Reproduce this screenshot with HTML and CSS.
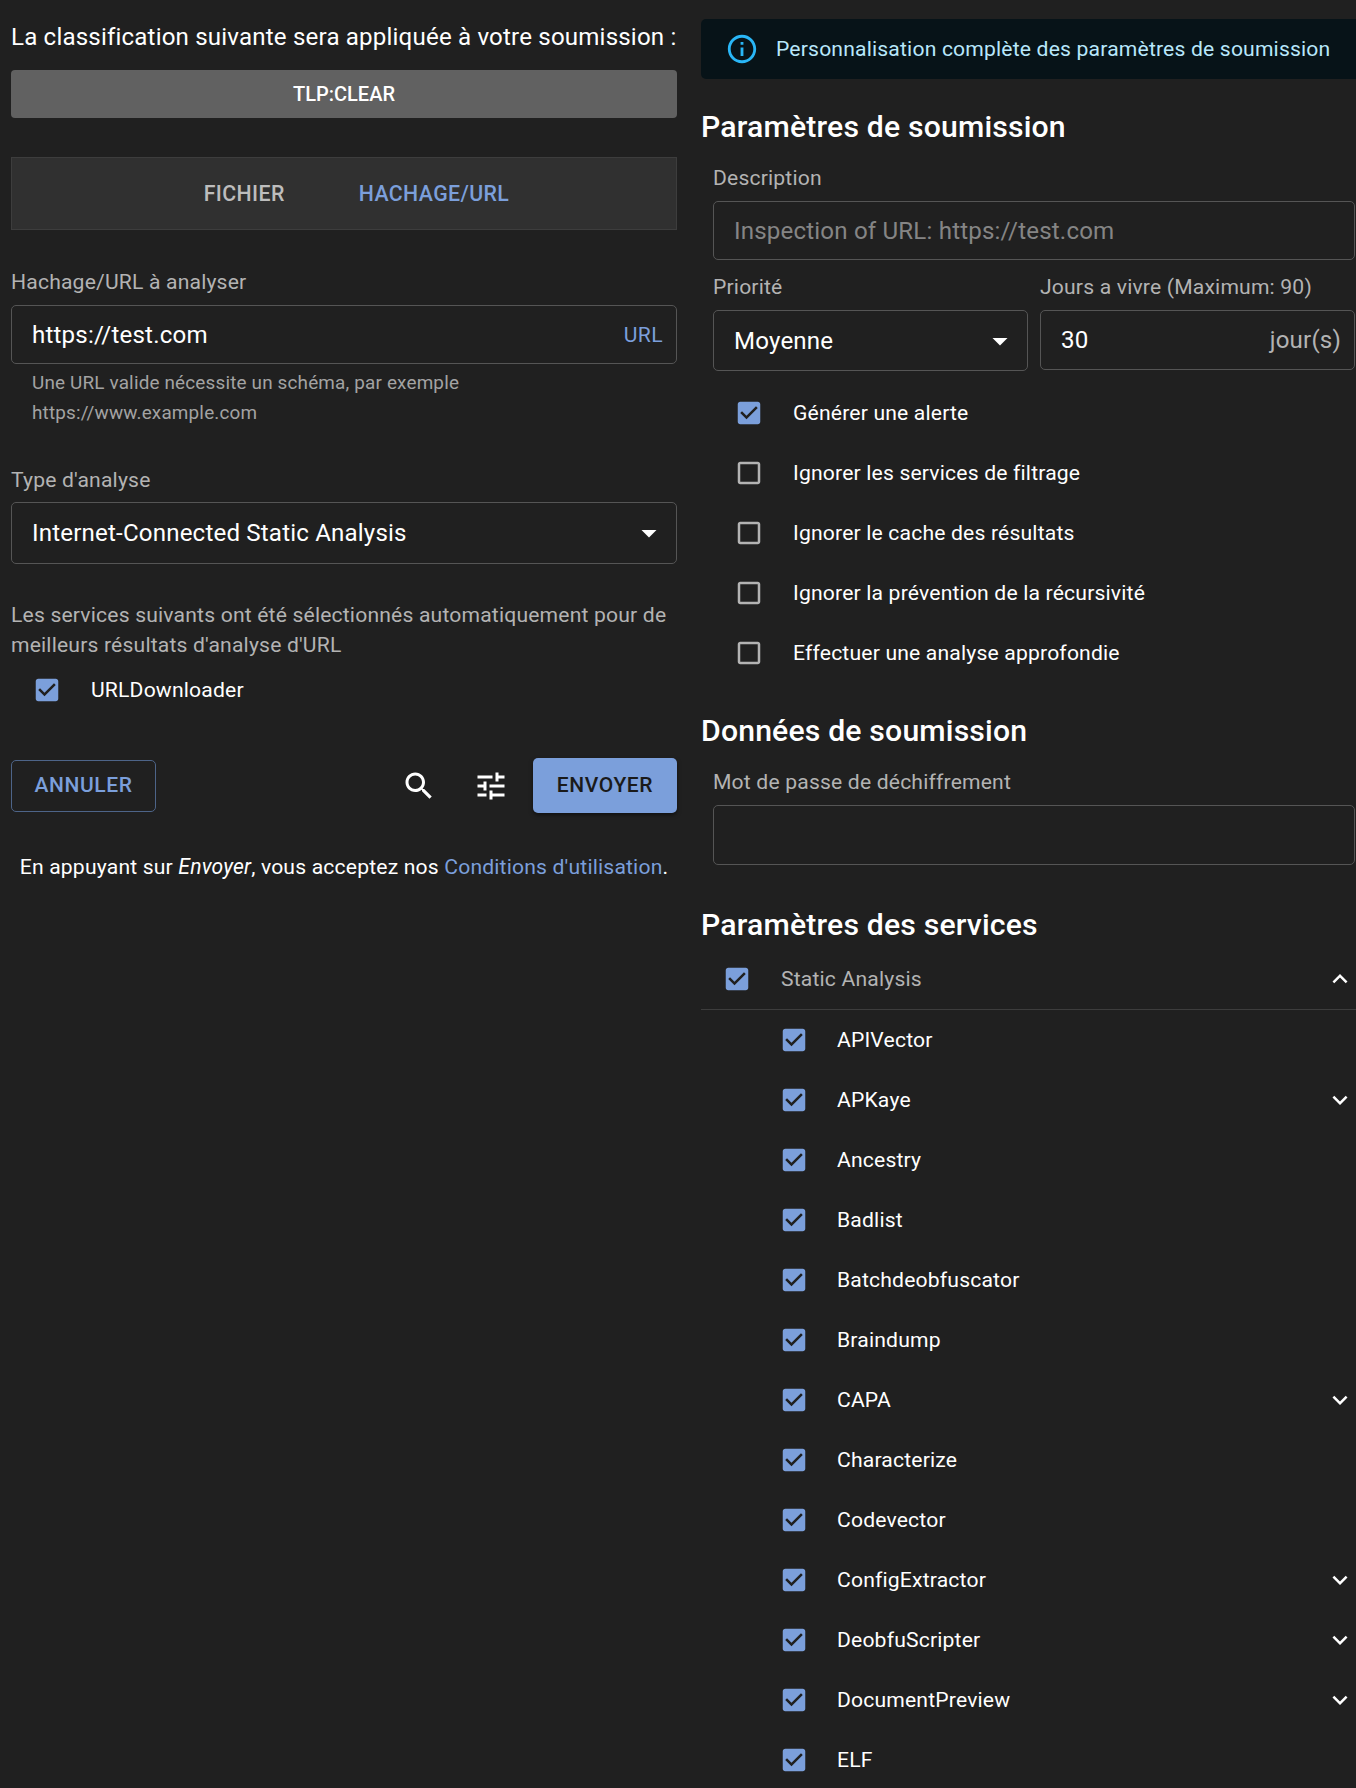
FILE: index.html
```html
<!DOCTYPE html>
<html lang="fr">
<head>
  <meta charset="UTF-8" />
  <title>Soumission</title>
  <link rel="stylesheet" href="styles.css">
</head>
<body>
  <svg class="sprite" width="0" height="0">
    <symbol id="i-checked" viewBox="0 0 24 24"><path d="M19 3H5c-1.11 0-2 .9-2 2v14c0 1.1.89 2 2 2h14c1.11 0 2-.9 2-2V5c0-1.1-.89-2-2-2zm-9 14l-5-5 1.41-1.41L10 14.17l7.59-7.59L19 8l-9 9z"/></symbol>
    <symbol id="i-empty" viewBox="0 0 24 24"><path d="M19 5v14H5V5h14m0-2H5c-1.1 0-2 .9-2 2v14c0 1.1.9 2 2 2h14c1.1 0 2-.9 2-2V5c0-1.1-.9-2-2-2z"/></symbol>
    <symbol id="i-more" viewBox="0 0 24 24"><path d="M16.59 8.59 12 13.17 7.41 8.59 6 10l6 6 6-6z"/></symbol>
    <symbol id="i-less" viewBox="0 0 24 24"><path d="m12 8-6 6 1.41 1.41L12 10.83l4.59 4.58L18 14z"/></symbol>
    <symbol id="i-drop" viewBox="0 0 24 24"><path d="M7 10l5 5 5-5z"/></symbol>
  </svg>

  <div class="page">
    <div class="left">
      <div class="class-title">La classification suivante sera appliquée à votre soumission :</div>
      <div class="tlp">TLP:CLEAR</div>

      <div class="tabs">
        <span class="tab">FICHIER</span>
        <span class="tab active">HACHAGE/URL</span>
      </div>

      <div class="label">Hachage/URL à analyser</div>
      <div class="field field-url">
        <span>https://test.com</span>
        <span class="url-tag">URL</span>
      </div>
      <div class="helper">Une URL valide nécessite un schéma, par exemple<br>https://www.example.com</div>

      <div class="label label-type">Type d'analyse</div>
      <div class="field field-type">
        <span>Internet-Connected Static Analysis</span>
        <svg class="drop"><use href="#i-drop"/></svg>
      </div>

      <p class="auto-note">Les services suivants ont été sélectionnés automatiquement pour de meilleurs résultats d'analyse d'URL</p>
      <div class="check-row check-url">
        <svg class="box on"><use href="#i-checked"/></svg>
        <span>URLDownloader</span>
      </div>

      <div class="actions">
        <span class="btn-cancel">ANNULER</span>
        <svg class="act-icon" viewBox="0 0 24 24"><path d="M15.5 14h-.79l-.28-.27C15.41 12.59 16 11.11 16 9.5 16 5.91 13.09 3 9.5 3S3 5.91 3 9.5 5.91 16 9.5 16c1.61 0 3.09-.59 4.23-1.57l.27.28v.79l5 4.99L20.49 19l-4.99-5zm-6 0C7.01 14 5 11.99 5 9.5S7.01 5 9.5 5 14 7.01 14 9.5 11.99 14 9.5 14z"/></svg>
        <svg class="act-icon" viewBox="0 0 24 24"><path d="M3 17v2h6v-2H3zM3 5v2h10V5H3zm10 16v-2h8v-2h-8v-2h-2v6h2zM7 9v2H3v2h4v2h2V9H7zm14 4v-2H11v2h10zm-6-4h2V7h4V5h-4V3h-2v6z"/></svg>
        <span class="btn-send">ENVOYER</span>
      </div>

      <div class="terms">En appuyant sur <i>Envoyer</i>, vous acceptez nos <a href="#">Conditions d'utilisation</a>.</div>
    </div>

    <div class="right">
      <div class="alert">
        <svg class="alert-icon" viewBox="0 0 24 24"><path d="M11 7h2v2h-2zm0 4h2v6h-2zm1-9C6.48 2 2 6.48 2 12s4.48 10 10 10 10-4.48 10-10S17.52 2 12 2zm0 18c-4.41 0-8-3.59-8-8s3.59-8 8-8 8 3.59 8 8-3.59 8-8 8z"/></svg>
        <span>Personnalisation complète des paramètres de soumission</span>
      </div>

      <h2 class="heading">Paramètres de soumission</h2>
      <div class="group">
        <div class="label">Description</div>
        <div class="field field-desc">Inspection of URL: https://test.com</div>

        <div class="two-cols">
          <div>
            <div class="label">Priorité</div>
            <div class="field field-prio">
              <span>Moyenne</span>
              <svg class="drop"><use href="#i-drop"/></svg>
            </div>
          </div>
          <div>
            <div class="label">Jours a vivre (Maximum: 90)</div>
            <div class="field field-days">
              <span>30</span>
              <span class="days-unit">jour(s)</span>
            </div>
          </div>
        </div>

        <div class="opts">
          <div class="check-row"><svg class="box on"><use href="#i-checked"/></svg><span>Générer une alerte</span></div>
          <div class="check-row"><svg class="box"><use href="#i-empty"/></svg><span>Ignorer les services de filtrage</span></div>
          <div class="check-row"><svg class="box"><use href="#i-empty"/></svg><span>Ignorer le cache des résultats</span></div>
          <div class="check-row"><svg class="box"><use href="#i-empty"/></svg><span>Ignorer la prévention de la récursivité</span></div>
          <div class="check-row"><svg class="box"><use href="#i-empty"/></svg><span>Effectuer une analyse approfondie</span></div>
        </div>
      </div>

      <h2 class="heading heading-data">Données de soumission</h2>
      <div class="group">
        <div class="label">Mot de passe de déchiffrement</div>
        <div class="field field-pass"></div>
      </div>

      <h2 class="heading heading-svc">Paramètres des services</h2>
      <div class="cat-row">
        <svg class="box on"><use href="#i-checked"/></svg>
        <span class="cat-name">Static Analysis</span>
        <svg class="chev"><use href="#i-less"/></svg>
      </div>
      <div class="svc-list">
        <div class="svc-row"><svg class="box on"><use href="#i-checked"/></svg><span>APIVector</span></div>
        <div class="svc-row"><svg class="box on"><use href="#i-checked"/></svg><span>APKaye</span><svg class="chev"><use href="#i-more"/></svg></div>
        <div class="svc-row"><svg class="box on"><use href="#i-checked"/></svg><span>Ancestry</span></div>
        <div class="svc-row"><svg class="box on"><use href="#i-checked"/></svg><span>Badlist</span></div>
        <div class="svc-row"><svg class="box on"><use href="#i-checked"/></svg><span>Batchdeobfuscator</span></div>
        <div class="svc-row"><svg class="box on"><use href="#i-checked"/></svg><span>Braindump</span></div>
        <div class="svc-row"><svg class="box on"><use href="#i-checked"/></svg><span>CAPA</span><svg class="chev"><use href="#i-more"/></svg></div>
        <div class="svc-row"><svg class="box on"><use href="#i-checked"/></svg><span>Characterize</span></div>
        <div class="svc-row"><svg class="box on"><use href="#i-checked"/></svg><span>Codevector</span></div>
        <div class="svc-row"><svg class="box on"><use href="#i-checked"/></svg><span>ConfigExtractor</span><svg class="chev"><use href="#i-more"/></svg></div>
        <div class="svc-row"><svg class="box on"><use href="#i-checked"/></svg><span>DeobfuScripter</span><svg class="chev"><use href="#i-more"/></svg></div>
        <div class="svc-row"><svg class="box on"><use href="#i-checked"/></svg><span>DocumentPreview</span><svg class="chev"><use href="#i-more"/></svg></div>
        <div class="svc-row"><svg class="box on"><use href="#i-checked"/></svg><span>ELF</span></div>
      </div>
    </div>
  </div>
</body>
</html>
```

FILE: styles.css
```css
html, body {
  margin: 0;
  height: 1788px;
  overflow: hidden;
}

body {
  font-family: Roboto, "Liberation Sans", sans-serif;
  font-size: 18.24px;
  letter-spacing: 0.17px;
  background-color: #202020;
  color: #fff;
}

.sprite {
  position: absolute;
}

.page {
  display: flex;
  gap: 24px;
  padding: 0 0 0 11px;
}

.left {
  width: 666px;
  flex-shrink: 0;
}

.right {
  flex: 1;
  min-width: 0;
  padding-top: 19px;
}

.class-title {
  font-size: 24.12px;
  line-height: 32px;
  padding-top: 21px;
  white-space: nowrap;
}

.tlp {
  margin-top: 17px;
  height: 48px;
  line-height: 48px;
  text-align: center;
  background-color: #616161;
  border-radius: 4px;
  font-weight: 500;
  font-size: 20px;
  letter-spacing: 0;
}

.tabs {
  margin-top: 39px;
  height: 71px;
  padding-left: 25px;
  display: flex;
  justify-content: center;
  align-items: center;
  gap: 74px;
  background-color: #303030;
  border: 1px solid #3d3d3d;
  font-weight: 500;
  font-size: 21.3px;
  letter-spacing: 0.4px;
}

.tab {
  color: #bdbdbd;
}

.tab.active {
  color: #7b9fdb;
}

.label {
  color: #b3b3b3;
  font-size: 21.13px;
  line-height: 26px;
}

.left .tabs + .label {
  margin-top: 39px;
}

.field {
  margin-top: 10px;
  box-sizing: border-box;
  display: flex;
  align-items: center;
  justify-content: space-between;
  border: 1px solid #555;
  border-radius: 5px;
  padding: 0 13px 0 20px;
  font-size: 24.12px;
}

.field-url {
  height: 59px;
}

.url-tag {
  color: #7b9fdb;
  font-size: 21.13px;
  letter-spacing: 0.4px;
}

.helper {
  margin: 4px 0 0 21px;
  color: #a3a3a3;
  font-size: 18.9px;
  line-height: 30px;
}

.label-type {
  margin-top: 39px;
}

.field-type {
  height: 62px;
  margin-top: 9px;
}

.drop {
  width: 36px;
  height: 36px;
  fill: #fff;
  margin-right: -4px;
}

.auto-note {
  margin: 36px 0 0;
  color: #b3b3b3;
  font-size: 21.13px;
  line-height: 30px;
}

.check-row {
  display: flex;
  align-items: center;
  gap: 29px;
  height: 60px;
  padding-left: 21px;
  font-size: 21.13px;
}

.check-row span,
.svc-row span,
.cat-name {
  padding-bottom: 2px;
}

.check-url {
  height: 30px;
  margin-top: 15px;
}

.box {
  width: 30px;
  height: 30px;
  flex-shrink: 0;
  fill: #b3b3b3;
}

.box.on {
  fill: #7b9fdb;
}

.actions {
  margin-top: 53px;
  display: flex;
  align-items: center;
}

.btn-cancel {
  box-sizing: border-box;
  width: 145px;
  height: 52px;
  line-height: 48px;
  text-align: center;
  border: 1px solid #4d6488;
  border-radius: 5px;
  color: #7b9fdb;
  font-weight: 500;
  font-size: 21px;
  letter-spacing: 0.6px;
  margin-right: auto;
}

.act-icon {
  width: 36px;
  height: 36px;
  fill: #fff;
  margin-right: 36px;
}

.act-icon + .act-icon {
  margin-right: 24px;
}

.btn-send {
  box-sizing: border-box;
  width: 144px;
  height: 55px;
  line-height: 55px;
  text-align: center;
  background-color: #7b9fdb;
  border-radius: 5px;
  color: #1a1a1a;
  font-weight: 500;
  font-size: 21px;
  letter-spacing: 0.6px;
  box-shadow: 0 2px 4px rgba(0, 0, 0, 0.5);
}

.terms {
  margin-top: 39px;
  text-align: center;
  font-size: 21.13px;
  line-height: 30px;
}

.terms a {
  color: #7b9fdb;
  text-decoration: none;
}

.alert {
  height: 60px;
  display: flex;
  align-items: center;
  gap: 17px;
  padding-left: 24px;
  background-color: #071318;
  border-radius: 5px 0 0 5px;
  color: #b8e7fb;
  font-size: 21.13px;
}

.alert span {
  padding-bottom: 2px;
}

.alert-icon {
  width: 34px;
  height: 34px;
  fill: #29b6f6;
}

.heading {
  margin: 28px 0 0;
  font-size: 30.2px;
  line-height: 40px;
  font-weight: 500;
}

.heading-data {
  margin-top: 28px;
}

.heading-svc {
  margin-top: 40px;
}

.group {
  padding: 18px 1px 0 12px;
}

.field-desc {
  height: 59px;
  color: #858585;
}

.two-cols {
  display: grid;
  grid-template-columns: 315px 1fr;
  gap: 12px;
  margin-top: 14px;
}

.field-prio {
  height: 61px;
}

.field-days {
  height: 60px;
}

.days-unit {
  color: #b3b3b3;
}

.opts {
  padding-top: 12px;
}

.field-pass {
  height: 60px;
}

.cat-row,
.svc-row {
  display: flex;
  align-items: center;
  height: 60px;
  font-size: 21.13px;
}

.cat-row {
  padding-left: 21px;
  gap: 29px;
  border-bottom: 1px solid #3d3d3d;
  margin-top: 4px;
}

.cat-name {
  color: #b3b3b3;
}

.svc-row {
  padding-left: 78px;
  gap: 28px;
}

.chev {
  width: 30px;
  height: 30px;
  fill: #fff;
  margin-left: auto;
  margin-right: 1px;
}
```
